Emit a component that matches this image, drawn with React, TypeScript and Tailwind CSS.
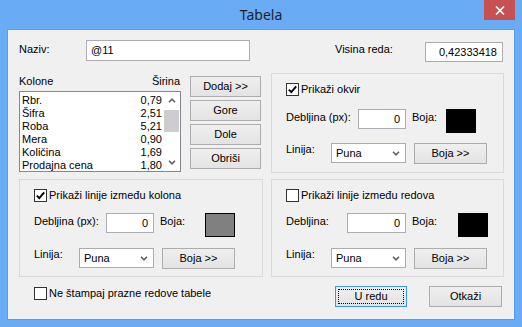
import React from 'react';

interface Column {
  name: string;
  width: string;
}

const columns: Column[] = [
  { name: 'Rbr.', width: '0,79' },
  { name: 'Šifra', width: '2,51' },
  { name: 'Roba', width: '5,21' },
  { name: 'Mera', width: '0,90' },
  { name: 'Količina', width: '1,69' },
  { name: 'Prodajna cena', width: '1,80' },
];

function Checkbox({ checked = false }: { checked?: boolean }) {
  return (
    <span className="w-[13px] h-[13px] shrink-0 border border-[#333333] bg-white flex items-center justify-center">
      {checked && (
        <svg width="11" height="11" viewBox="0 0 11 11" aria-hidden="true">
          <path d="M1.8 5.6 L4.3 8.1 L9.2 2.4" fill="none" stroke="#000" strokeWidth="1.9" />
        </svg>
      )}
    </span>
  );
}

function Btn({ children, className = '' }: { children: React.ReactNode; className?: string }) {
  return (
    <div
      className={`border border-[#acacac] bg-gradient-to-b from-[#efefef] to-[#e3e3e3] flex items-center justify-center ${className}`}
    >
      {children}
    </div>
  );
}

function TextInput({
  value,
  className = '',
  right = false,
}: {
  value: string;
  className?: string;
  right?: boolean;
}) {
  return (
    <div
      className={`border border-[#abadb3] bg-white flex items-center ${
        right ? 'justify-end pr-[5px]' : 'pl-[4px]'
      } ${className}`}
    >
      {value}
    </div>
  );
}

function Chevron({ up = false }: { up?: boolean }) {
  return (
    <svg width="8" height="5" viewBox="0 0 8 5" aria-hidden="true">
      <path
        d={up ? 'M1 4.2 L4 1.2 L7 4.2' : 'M1 0.8 L4 3.8 L7 0.8'}
        fill="none"
        stroke="#606060"
        strokeWidth="1.6"
      />
    </svg>
  );
}

function Select() {
  return (
    <div className="w-[75px] h-[20px] border border-[#acacac] bg-white flex items-center justify-between pl-[4px] pr-[5px]">
      <span>Puna</span>
      <Chevron />
    </div>
  );
}

interface GroupProps {
  title: string;
  checked: boolean;
  debLabel: string;
  debW: string;
  inputW: string;
  bojaW: string;
  swatch: string;
  gapA: string;
  gapB: string;
  className: string;
}

function LineGroup({ title, checked, debLabel, debW, inputW, bojaW, swatch, gapA, gapB, className }: GroupProps) {
  return (
    <div className={`border border-[#dadada] pl-[14px] pt-[9px] ${className}`}>
      <div className="flex items-center gap-[2px]">
        <Checkbox checked={checked} />
        <span>{title}</span>
      </div>
      <div className={`flex items-start ${gapA}`}>
        <span className={`mt-[2px] ${debW}`}>{debLabel}</span>
        <TextInput value="0" right className={`h-[20px] ${inputW}`} />
        <span className={`ml-[6px] mt-[2px] ${bojaW}`}>Boja:</span>
        <div className={`w-[30px] h-[24px] ${swatch}`} />
      </div>
      <div className={`flex items-start ${gapB}`}>
        <span className="w-[45px]">Linija:</span>
        <Select />
        <Btn className="ml-[8px] w-[73px] h-[21px]">Boja &gt;&gt;</Btn>
      </div>
    </div>
  );
}

export default function App() {
  return (
    <div className="w-[522px] h-[327px] bg-[#69abf4] px-[7px] pb-[7px] flex flex-col font-['Liberation_Sans',Arial,sans-serif] text-[11px] leading-[13px] text-black">
      {/* Title bar */}
      <div className="h-[29px] grid grid-cols-[1fr_auto_1fr] items-start">
        <div />
        <div className="pt-[6px] font-['Noto_Sans',sans-serif] text-[14px] leading-[18px] text-[#1f1f1f]">Tabela</div>
        <div className="justify-self-end w-[31px] h-[20px] bg-[#c75050] flex items-center justify-center">
          <svg width="10" height="9" viewBox="0 0 10 9" aria-hidden="true">
            <path d="M1 0.5 L9 8.5 M9 0.5 L1 8.5" stroke="#fff" strokeWidth="1.7" />
          </svg>
        </div>
      </div>

      {/* Client area */}
      <div className="flex-1 border border-[#5c9ce4] bg-[#f0f0f0] pl-[11px] pt-[10px]">
        <div className="flex items-start">
          <span className="w-[67px] mt-[3px]">Naziv:</span>
          <TextInput value="@11" className="w-[164px] h-[21px]" />
          <span className="ml-[85px] w-[90px] mt-[3px]">Visina reda:</span>
          <TextInput value="0,42333418" right className="w-[78px] h-[20px] mt-[2px]" />
        </div>

        <div className="mt-[11px] grid grid-cols-[244px_233px] gap-x-[8px] gap-y-[6px]">
          {/* Columns list + buttons */}
          <div className="flex">
            <div className="w-[162px]">
              <div className="mt-[2px] pr-[1px] flex justify-between">
                <span>Kolone</span>
                <span>Širina</span>
              </div>
              <div className="mt-[3px] h-[81px] border border-[#828790] bg-white flex">
                <div className="flex-1 pt-[2px] pl-[2px] pr-[1px] overflow-hidden">
                  {columns.map((c) => (
                    <div key={c.name} className="h-[13px] flex justify-between">
                      <span>{c.name}</span>
                      <span>{c.width}</span>
                    </div>
                  ))}
                </div>
                <div className="w-[17px] flex flex-col">
                  <div className="h-[17px] flex items-center justify-center">
                    <Chevron up />
                  </div>
                  <div className="mt-[1px] mx-[1px] h-[22px] bg-[#cdcdcd]" />
                  <div className="flex-1" />
                  <div className="h-[17px] flex items-center justify-center">
                    <Chevron />
                  </div>
                </div>
              </div>
            </div>
            <div className="ml-[9px] mt-[3px] w-[71px] flex flex-col gap-[3px]">
              <Btn className="h-[21px]">Dodaj &gt;&gt;</Btn>
              <Btn className="h-[21px]">Gore</Btn>
              <Btn className="h-[21px]">Dole</Btn>
              <Btn className="h-[21px]">Obriši</Btn>
            </div>
          </div>

          <LineGroup
            title="Prikaži okvir"
            checked
            debLabel="Debljina (px):"
            debW="w-[72px]"
            inputW="w-[48px]"
            bojaW="w-[34px]"
            swatch="bg-black"
            gapA="mt-[13px]"
            gapB="mt-[10px]"
            className="h-[100px]"
          />

          <LineGroup
            title="Prikaži linije između kolona"
            checked
            debLabel="Debljina (px):"
            debW="w-[72px]"
            inputW="w-[48px]"
            bojaW="w-[45px]"
            swatch="bg-[#808080] border border-black"
            gapA="mt-[11px]"
            gapB="mt-[11px]"
            className="h-[98px]"
          />

          <LineGroup
            title="Prikaži linije između redova"
            checked={false}
            debLabel="Debljina:"
            debW="w-[61px]"
            inputW="w-[59px]"
            bojaW="w-[46px]"
            swatch="bg-black"
            gapA="mt-[11px]"
            gapB="mt-[11px]"
            className="h-[98px]"
          />

          {/* Bottom row */}
          <div className="mt-[4px] ml-[15px] flex items-center gap-[2px] self-start">
            <Checkbox />
            <span>Ne štampaj prazne redove tabele</span>
          </div>
          <div className="mt-[3px] ml-[64px] flex gap-[22px]">
            <div className="w-[72px] h-[21px] border border-[#3c96f0] bg-gradient-to-b from-[#efefef] to-[#e3e3e3] p-[2px] flex">
              <div className="flex-1 border border-dotted border-black flex items-center justify-center">U redu</div>
            </div>
            <Btn className="w-[73px] h-[21px]">Otkaži</Btn>
          </div>
        </div>
      </div>
    </div>
  );
}
